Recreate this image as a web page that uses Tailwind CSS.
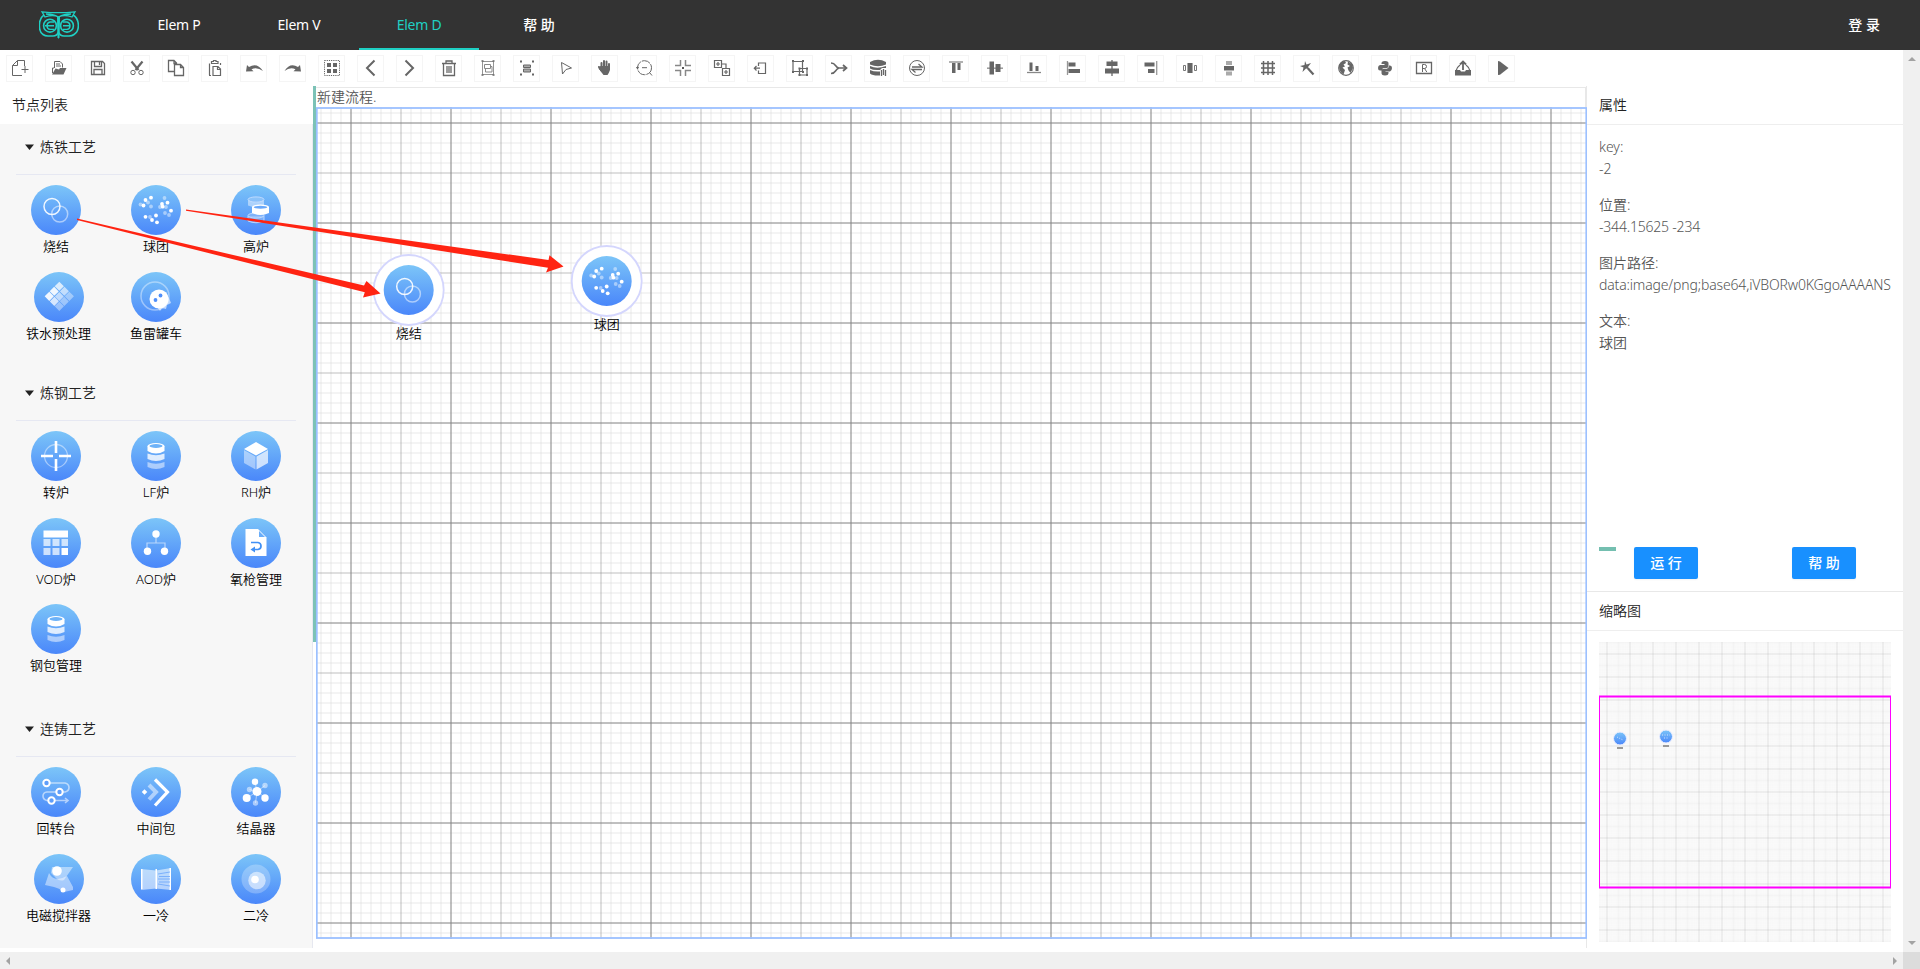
<!DOCTYPE html>
<html lang="zh-CN">
<head>
<meta charset="utf-8">
<title>Elem D</title>
<script src="https://cdn.jsdelivr.net/npm/@tailwindcss/browser@4"></script>
</head>
<body class="relative flex h-[969px] w-[1920px] flex-col overflow-hidden bg-white font-['Noto_Sans','Noto_Sans_CJK_SC',sans-serif] text-sm text-[#555]">

<svg class="absolute size-0" aria-hidden="true">
  <defs>
    <linearGradient id="ball" x1="0" y1="0" x2="0" y2="1"><stop offset="0" stop-color="#7cc5f8"/><stop offset="1" stop-color="#4a87fa"/></linearGradient>
    <g id="tile">
      <path stroke="lightgray" stroke-width=".5" d="M10 0V100M20 0V100M30 0V100M40 0V100M60 0V100M70 0V100M80 0V100M90 0V100M0 10H100M0 20H100M0 30H100M0 40H100M0 60H100M0 70H100M0 80H100M0 90H100"/>
      <path stroke="gray" stroke-width=".5" d="M0 0V100M100 0V100M0 0H100M0 100H100"/>
      <path stroke="gray" d="M50 0V100M0 50H100"/>
    </g>
    <pattern id="grid" width="100" height="100" patternUnits="userSpaceOnUse" patternTransform="translate(-15 -34)"><use href="#tile"/></pattern>
  </defs>
</svg>

<header class="flex h-[50px] shrink-0 items-center bg-[#333] text-white">
  <div class="w-[119px] pl-[39px]">
    <svg class="h-7 w-10" viewBox="0 0 40 28" fill="none" stroke="#1fd0c4" stroke-width="1.6">
      <path d="M5 4C-1 8-1 20 4 23.500Q6 25 9 25H14Q18 25 19.500 21Q21 25 25 25H30Q33 25 35 23.500C41 20 41 8 34 4"/>
      <path stroke-width="1.300" d="M3 .8Q19.500 2.500 36 .8L33 6Q25 3 19.500 6Q14 3 6 6ZM7 3Q14 3 19.500 6Q25 3 32 3"/>
      <circle cx="11" cy="14.700" r="6.400"/><circle cx="28" cy="14.700" r="6.400"/>
      <path stroke-width="1.400" d="M6 14.700H15M15 11H11Q8 11.500 8 14.700T11 18.400H15M24 11H28Q31 11.500 31 14.700T28 18.400H24M24 14.700H31"/>
      <path fill="#1fd0c4" stroke-width="1" d="M18.500 6H20.500L20 27H19Z"/>
    </svg>
  </div>
  <nav class="flex h-full flex-1 text-center leading-[50px]">
    <a class="w-[120px] tracking-[-0.25px]">Elem P</a><a class="w-[120px] tracking-[-0.25px]">Elem V</a>
    <a class="w-[120px] border-b-2 border-[#1fd0c4] tracking-[-0.25px] text-[#1fd0c4]">Elem D</a><a class="w-[120px] font-medium">帮 助</a>
  </nav>
  <a class="mr-10 font-medium">登 录</a>
</header>

<div class="flex min-h-0 flex-1">
  <div class="flex w-[1903px] flex-col">
    <div id="toolbar" class="flex h-[36px] shrink-0 gap-3 pt-[5px] pl-1.5"></div>
    <div class="flex h-[862px] shrink-0">
      <aside class="flex w-[313px] shrink-0 flex-col">
        <h2 class="h-[38px] pl-3 leading-[37px] font-[350] text-[#222]">节点列表</h2>
        <div id="palette" class="h-[824px] border-r border-[#e6e8f0] bg-[#f7f7f7] px-4"></div>
      </aside>

      <main class="relative w-[1273px] shrink-0">
        <div class="mt-px ml-[3px] h-[21px] border-t border-r border-[#e8e8e8] pl-px leading-[17px] font-[350]">新建流程.</div>
        <svg id="board" class="-mt-px ml-[3px] block" width="1271" height="832">
          <rect width="1271" height="832" fill="#fff"/><rect width="1271" height="832" fill="url(#grid)"/>
          <rect x=".8" y="1" width="1269.500" height="830" fill="none" stroke="#9cc0ff" stroke-width="1.800"/>
          <g id="placed"></g>
        </svg>
        <div class="absolute top-0 left-0 h-[556px] w-[3px] bg-[#7cc2b6]"></div>
      </main>

      <section class="flex flex-1 flex-col border-l border-[#e8e8e8] font-[350]">
        <h2 class="h-[39px] border-b border-[#eee] pl-3 leading-[37px] text-[#222]">属性</h2>
        <dl class="h-[419px] pt-[11px] pl-3 leading-[22px] text-[#555]">
          <dt>key:</dt><dd class="mb-[14px]">-2</dd>
          <dt>位置:</dt><dd class="mb-[14px] tracking-[-0.2px]">-344.15625 -234</dd>
          <dt>图片路径:</dt><dd class="mb-[14px] tracking-[-0.16px]">data:image/png;base64,iVBORw0KGgoAAAANS</dd>
          <dt>文本:</dt><dd>球团</dd>
        </dl>
        <div class="flex h-[48px] border-b border-[#e8e8e8] pt-[3px] pl-3">
          <i class="mr-[18px] h-1 w-[17px] bg-[#74bfb0]"></i>
          <button class="h-8 w-16 rounded-xs bg-[#1890ff] font-medium text-white shadow-xs">运 行</button>
          <button class="ml-[94px] h-8 w-16 rounded-xs bg-[#1890ff] font-medium text-white shadow-xs">帮 助</button>
        </div>
        <h2 class="h-[39px] border-b border-[#eee] pl-3 leading-[38px] text-[#222]">缩略图</h2>
        <svg class="mt-[11px] ml-3" width="292" height="300" id="mini">
          <defs><pattern id="minigrid" width="100" height="100" patternUnits="userSpaceOnUse" patternTransform="translate(-3.500 .5) scale(.23)"><use href="#tile"/></pattern></defs>
          <rect width="292" height="300" fill="#fdfdfd"/><rect width="292" height="300" fill="url(#minigrid)"/>
          <g fill="url(#ball)" stroke="#eceeff"><circle cx="21" cy="96.500" r="6.500"/><circle cx="67" cy="94.500" r="6.500"/></g>
          <path stroke="#fff" opacity=".7" stroke-dasharray="1 1.500" d="M18 95L24 98M63 93L71 93M65 96L69 96"/>
          <path stroke="#999" stroke-width="2" d="M18 106H24M64 104H70"/>
          <path fill="none" stroke="#f0f" d="M.5 54V246M291.500 54V246"/>
          <path fill="none" stroke="#f0f" stroke-width="2" d="M0 54.500H292M0 245.500H292"/>
        </svg>
      </section>
    </div>
    <div class="mt-1 flex h-[17px] shrink-0 items-center justify-between bg-[#f0f0f0] px-1.5">
      <svg class="h-2 w-1" viewBox="0 0 4 8"><path fill="#a3a3a3" d="M4 0V8L0 4Z"/></svg>
      <svg class="h-2 w-1" viewBox="0 0 4 8"><path fill="#a3a3a3" d="M0 0V8L4 4Z"/></svg>
    </div>
  </div>
  <div class="flex w-[17px] flex-col items-center bg-[#f0f0f0]">
    <svg class="mt-[7px] h-1 w-2" viewBox="0 0 8 4"><path fill="#a3a3a3" d="M0 4H8L4 0Z"/></svg>
    <svg class="mt-auto mb-[7px] h-1 w-2" viewBox="0 0 8 4"><path fill="#a3a3a3" d="M0 0H8L4 4Z"/></svg>
    <div class="size-[17px] bg-[#dcdcdc]"></div>
  </div>
</div>

<svg class="pointer-events-none absolute top-0 left-0" width="600" height="310">
  <path fill="#ff2412" d="M77 218.600L364 285.500 366.500 281 380.500 293.500 363 297.500 364.800 292.300 77 220ZM186 209.400L548.500 260 549.500 255.300 563.500 266.500 546 272.500 548 267.800 186 210.800Z"/>
</svg>

<script>
// Toolbar glyphs, one 27x27 button each
const tools = [
  '<path d="M6.500 20.500V10.500L11.500 5.500H18.500V11M16 20.500H6.500M11.500 5.500V10.500H6.500M19 11V18M15.500 14.500H22.500"/>',
  '<path d="M9.500 13V6.500H15L17.500 9V12.500M11 9H15M11 11H16M7.500 18V13H9"/><path class="fill-[#666]" stroke="none" d="M7 19.500L10.500 13.500 14 14.500 15 13H21.500L18.500 19.500Z"/>',
  '<path stroke-width="1.300" d="M7.500 6.500H18.500L20.500 8.500V19.500H7.500ZM10.500 6.500V11.500H17.500V6.500M15.500 7V10M10 19.500V14.500H18V19.500"/>',
  '<path stroke-width="2.200" d="M8.500 6.500L15.500 15M19.500 6.500L12.500 15"/><circle cx="10" cy="17.500" r="2.200"/><circle cx="18" cy="17.500" r="2.200"/>',
  '<path stroke-width="1.300" d="M12.500 16.500H6.500V5.500H12L14.500 8V10M12 5.500V8.500H14.500M12.500 9.500H18.500L21.500 12.500V20.500H12.500ZM18.500 9.500V12.500H21.500"/>',
  '<path stroke-width="1.200" d="M8.500 20V8.500M10 20.500H8M10.500 8.500V6.500H12.500V5.500H15V6.500H17V8.500ZM19.500 8V10M12 11.500H17L19.500 14V20.500H12ZM16.500 11.500V14.500H19.500"/>',
  '<path class="fill-[#666]" stroke="none" d="M6 16.500L7 10 9 12Q17 7 23 16Q17 11.500 11.500 14.200L13.500 16.200Z"/>',
  '<path class="fill-[#666]" stroke="none" d="M22 16.500L21 10 19 12Q11 7 5.500 16Q11 11.500 16.500 14.200L14.500 16.200Z"/>',
  '<rect x="6.500" y="5.500" width="15" height="15" stroke-dasharray="1.200 1"/><path class="fill-[#666]" stroke="none" d="M9 8h4v4H9zM15 8h4v4h-4zM9 14h4v4H9zM15 14h4v4h-4z"/>',
  '<path stroke-width="2" d="M17.500 5.500L10 13 17.500 20.500"/>',
  '<path stroke-width="2" d="M9.500 5.500L17 13 9.500 20.500"/>',
  '<path stroke-width="1.300" d="M7 8.500H21M11 8V6H17V8M8.500 9V20.500H19.500V9M12 11V18M14 11V18M16 11V18"/>',
  '<path stroke-width=".7" d="M8.500 6.500H19.500V19.500H8.500Z"/><path stroke="#888" stroke-width="1" d="M10.500 9.500H16.500V13.500H10.500ZM16.500 11.500H18V17H11.500V13.500"/><path stroke-width="1.500" d="M7.500 6H9.500M18.500 6H20.500M7.500 20H9.500M18.500 20H20.500"/>',
  '<path d="M10.500 10H17.500V12.500H10.500ZM10.500 14H17.500V17H10.500Z" fill="#aaa"/><path stroke-width="2" d="M7 6.500H9M19 6.500H21M7 19.500H9M19 19.500H21"/>',
  '<path d="M9.500 7.500L19.500 13 14 14.500 10.500 19Z"/>',
  '<path stroke-width="2" stroke-linecap="round" d="M10.500 12V8M13 12V6M15.500 12V6.500M18 13V9M9 14L8 12"/><path class="fill-[#666]" stroke="none" d="M8.500 12L9.500 11H19V15Q18 18 16.500 20H12.500L9 15.500Z"/>',
  '<circle cx="14.500" cy="12.700" r="7" stroke-dasharray="9 1"/><path d="M12 12.700H17M19.500 17.500L22 20.500M6 12.700H9M7.500 11.500V14"/>',
  '<path stroke="#888" stroke-width="1.500" d="M11.500 5V10.500H6M16.500 5V10.500H22M11.500 21V15.500H6M16.500 21V15.500H22"/><path class="fill-[#555]" stroke="none" d="M13 12h2v2h-2z"/>',
  '<path stroke-width="1.200" d="M6.500 5.500H13.500V12.500H6.500ZM14.500 13.500H21.500V20.500H14.500ZM8 9H12M10 7V11M16 17H20M18 15V19M14 9H18V13"/>',
  '<path stroke-width="1.200" d="M11.500 11V8H18.500V18.500H11.500V15.500M7.500 13.200H13M9.500 11L7.300 13.200 9.500 15.500"/>',
  '<path stroke-width="1.200" d="M7 6.500H16.500V16.500H7ZM13.500 13.500H21V20H13.500Z"/><path class="fill-[#666]" stroke="none" d="M6 5h2v2H6zM16 5h2v2h-2zM6 16h2v2H6zM16 16h2v2h-2zM12.500 12.500h2v2h-2zM20 12.500h2v2h-2zM12.500 19h2v2h-2zM20 19h2v2h-2z"/>',
  '<path stroke-width="1.500" d="M6 8Q9 8 10.500 10.500T14 13H21M6 18.500Q9 18.500 10.500 16T14 13"/><path stroke-width="1.700" d="M18 10L21.500 13 18 16"/>',
  '<path class="fill-[#666]" stroke="none" d="M6 7Q14 2.500 22 7V9.500Q14 13 6 9.500ZM6 11Q13 14.500 22 11V13H18L16 15Q9 15.500 6 13.500ZM6 15Q10 17 16 16.500V20.500Q9 21 6 18.500Z"/><path stroke-width="1.300" d="M17.500 15V21M19.500 14V20M21.500 15V21"/>',
  '<circle cx="14" cy="13" r="7.500"/><path stroke-width="1.300" d="M9 12H19L15.500 9M19 14.500H9L12.500 17.500"/>',
  '<path stroke="#999" stroke-width="1.500" d="M7 7H21"/><path class="fill-[#666]" stroke="none" d="M10 8h3.500v10H10zM15.500 8h3v7h-3z"/>',
  '<path stroke="#999" stroke-width="1.500" d="M6 13.200H22"/><path class="fill-[#666]" stroke="none" d="M8.500 6.500H13v13H8.500zM14.500 9h5v8h-5z"/>',
  '<path stroke="#888" stroke-width="1.300" d="M7 17.500H21"/><path class="fill-[#666]" stroke="none" d="M9.500 7.500h3V16h-3zM15.500 11h3v5h-3z"/>',
  '<path stroke="#999" stroke-width="1.300" d="M8.500 6V20"/><path class="fill-[#666]" stroke="none" d="M9.500 7.500h7v4h-7zM9.500 14H21v4H9.500z"/>',
  '<path stroke-width="1.300" d="M14 5V21"/><path class="fill-[#666]" stroke="none" d="M8.500 6.500h11V11h-11zM7 13.500h14v5H7z"/>',
  '<path stroke="#999" stroke-width="1.300" d="M19.700 6V20"/><path class="fill-[#666]" stroke="none" d="M7.500 7.500h10v4h-10zM11 14h6.500v4H11z"/>',
  '<path stroke-width=".9" d="M7.500 10.500H9.500V15.500H7.500ZM18.500 10.500H20.500V15.500H18.500Z"/><path fill="#aaa" stroke="none" d="M11 8h6v10h-6z"/><path class="fill-[#666]" stroke="none" d="M12 8h4v10h-4z"/>',
  '<path fill="#aaa" stroke="none" d="M11 6h6v4h-6zM11 16.500h6v4h-6z"/><path class="fill-[#666]" stroke="none" d="M9 11h10v4.500H9z"/>',
  '<path stroke-width="1.500" d="M9.500 6V20M14 6V20M18.500 6V20M7 8.500H21M7 13H21M7 17.500H21"/>',
  '<path class="fill-[#666]" stroke="none" d="M12 6L13.500 9.500 18 8 15 12 17 14.500 13 13.500 9.500 17 10.500 12.500 7 11 11.500 10Z"/><path stroke-width="2.200" d="M15 13.500L20.500 19.500"/>',
  '<circle cx="14" cy="13" r="7.300" stroke-width="1.200"/><path class="fill-[#666]" stroke="none" d="M7 11Q8.500 6 13 6L14 8 11.500 9.500 13 11.500 10.500 12.500 13 15 11.500 19.500Q7 17 7 11ZM16 6.500L20 9 21 13 18.500 18 16.500 15.500 15.500 12.500 18 11 15.500 9.500Z"/>',
  '<path class="fill-[#666]" stroke="none" d="M10.500 9Q10 6 14 6T17.500 9V12L16 13H12L10.500 15.500H9Q7 15.500 7 13T9 10H13.500V9ZM17.500 17Q18 20.500 14 20.500T10.500 17V15L12 13.700H16L18 12V10.500H19Q21 10.500 21 13T19 16.500H14.500V17Z"/>',
  '<path stroke-width="1.300" d="M6.500 7.500H21.500V18.500H6.500Z"/><path d="M12.500 17V9.500H14.500Q16.500 9.500 16.500 11.500T14.500 13.500H12.500M14.500 13.500L16.800 17"/>',
  '<path stroke-width="1.800" d="M14 15V7M11 9.500L14 6.500 17 9.500"/><path stroke-width="1.200" d="M11 10Q8 12 7 16M17 10Q20 12 21 16"/><path class="fill-[#666]" stroke="none" d="M6 15H11L12 16.500H16L17 15H22V20.500H6Z"/>',
  '<path class="fill-[#666]" stroke="none" d="M10 6L12 6.500 20.500 13 12 19.700 10 20Z"/>',
];
document.getElementById('toolbar').innerHTML = tools.map(t =>
  `<button class="size-[27px] shrink-0 border border-[#f5f5f5]"><svg class="-m-px size-[27px]" viewBox="0 0 27 27" fill="none" stroke="#666">${t}</svg></button>`).join('');

const dots = (list, o) => `<g fill="#fff" opacity="${o}">` + list.map(([x, y]) => `<circle cx="${x}" cy="${y}" r="1.900"/>`).join('') + '</g>';
const drum = '<g fill="#fff"><path opacity=".5" d="M16.500 31Q25 34.500 33.500 31V36Q25 40 16.500 36Z"/><path opacity=".8" d="M16.500 22.500Q25 26 33.500 22.500V28Q25 32 16.500 28Z"/><path d="M16.500 15V20Q25 25 33.500 20V15Z"/><ellipse cx="25" cy="15" rx="8.500" ry="3"/></g><ellipse cx="25" cy="15" rx="6.500" ry="1.900" fill="#6db2f8"/>';
const art = {
  '烧结': '<g fill="none" stroke="#fff"><circle cx="28.700" cy="29" r="8" stroke-width="1.500" opacity=".5"/><circle cx="21" cy="21.500" r="8" stroke-width="1.500" opacity=".9"/></g>',
  '球团': dots([[14.500,15],[20,12.700],[12.500,20.500],[36.500,17.700],[31.700,21.700],[31,19],[40,25.700],[14.500,31.800],[25,30.500],[21,35],[26,37.300]], 1) + dots([[20,21.500],[33.500,13],[38,30],[34,28],[17,17.500],[9.500,19.500],[35,22],[29,22],[19,32]], .45),
  '高炉': '<path fill="#fff" opacity=".45" d="M17 15Q25 19.500 33 15V20.500Q25 24 17 20.500Z"/><g fill="#fff" fill-opacity=".2" stroke="#c4ddfe" stroke-width=".9"><ellipse cx="25" cy="14.500" rx="8" ry="2.600"/><path d="M17 31V36Q25 39.500 33 36V31"/><ellipse cx="25" cy="30.500" rx="8" ry="2.600"/></g><path fill="#fff" d="M21 22V28Q29.500 32 38 28V22Z"/><ellipse cx="29.500" cy="22" rx="8.500" ry="2.500" fill="#fff"/><ellipse cx="29.500" cy="22.300" rx="6.800" ry="1.500" fill="#69a8f9"/>',
  '铁水预处理': '<g transform="translate(25.300 24.500) rotate(45)" fill="#fff"><path opacity=".9" d="M-10.500 3.700h6.500v6.500h-6.500zM-10.500-3.200h6.500v6.300h-6.500z"/><path opacity=".75" d="M-10.500-10.500h6.500v6.500h-6.500zM-3.200 3.700h6.300v6.500h-6.300z"/><path opacity=".6" d="M-3.200-3.200h6.300v6.300h-6.300zM-3.200-10.500h6.300v6.500h-6.300z"/><path opacity=".4" d="M3.700-10.500h6.500v6.500H3.700zM3.700-3.200h6.500v6.300H3.700zM3.700 3.700h6.500v6.500H3.700z"/></g>',
  '鱼雷罐车': '<circle cx="24" cy="24" r="14" fill="none" stroke="#fff" stroke-width="1.500" opacity=".4"/><path fill="#fff" opacity=".6" d="M35 20L38 26 40 31 36 33 35 37 31 36 29 39 26 35Z"/><circle cx="28" cy="27" r="9.500" fill="#fff"/><circle cx="24.500" cy="28" r="1.900" fill="#4f8ffa"/><circle cx="29.500" cy="23.500" r="1.900" fill="#4f8ffa"/>',
  '转炉': '<g fill="none" stroke="#fff"><circle cx="25" cy="25" r="11.500" opacity=".45" stroke-width="1.300"/><path stroke-width="2.600" d="M25 10V22M25 28V40M10 25H22M28 25H40"/></g>',
  'LF炉': drum, '钢包管理': drum,
  'RH炉': '<g fill="#fff"><path d="M25 11L37 18 25 24.500 13 18Z"/><path opacity=".45" d="M13 19L24.500 25.500V38.500L13 32Z"/><path opacity=".7" d="M37 19L25.500 25.500V38.500L37 32Z"/></g>',
  'VOD炉': '<g fill="#fff"><path d="M12.500 12.500h24.500v7H12.500zM30.500 30h6.500v7h-6.500z"/><path opacity=".7" d="M12.500 21h7v7h-7zM21.500 21h7v7h-7zM30.500 21h6.500v7h-6.500zM12.500 30h7v7h-7zM21.500 30h7v7h-7z"/></g>',
  'AOD炉': '<path fill="none" stroke="#fff" opacity=".55" stroke-width="1.200" d="M25 16V25M16 33V25H34V33"/><g fill="#fff"><circle cx="25" cy="16" r="3.700"/><circle cx="16.500" cy="33.300" r="3.700"/><circle cx="33.500" cy="33.300" r="3.700"/></g>',
  '氧枪管理': '<path fill="#fff" d="M14.500 11H27L35.500 19.500V38H14.500Z"/><path fill="#6aadf9" d="M28 13V19H34Z"/><path fill="none" stroke="#3f8ff5" stroke-width="1.700" d="M20 24.500H27Q30 25 30 28T27 31.500H22"/><path fill="#3f8ff5" d="M24 28.500V34.500L19.500 31.500Z"/>',
  '回转台': '<g fill="none" stroke="#fff"><path opacity=".55" stroke-width="1.600" d="M18 16H34Q38 17 38 20.500T34 25H16Q12 25.500 12 29T16 33.500H36M34 31L37 33.500 34 36"/></g><g fill="#5f9efa" stroke="#fff" stroke-width="2"><circle cx="15.500" cy="16" r="3.200"/><circle cx="28.500" cy="25" r="3.200"/><circle cx="20.500" cy="33.500" r="3.200"/></g>',
  '中间包': '<g fill="none" stroke="#fff"><path stroke-width="3.200" d="M24 12.500L36.500 25 24 38.500"/><path opacity=".5" stroke-width="4" d="M18 18L25 25 18 32.500"/></g><path fill="#fff" d="M13.500 22.300L16.300 25 13.500 27.700 10.800 25Z"/>',
  '结晶器': '<g fill="#fff" stroke="#fff"><path opacity=".5" d="M26 24.500L24 15M26 24.500L34 18.500M26 24.500L18.500 22.500M26 24.500L16 31M26 24.500L34.500 31M26 24.500L24.500 36"/><g stroke="none"><g opacity=".5"><circle cx="34" cy="18.500" r="2.700"/><circle cx="18.500" cy="22.500" r="2.700"/><circle cx="24.500" cy="36" r="2.700"/></g><circle cx="24" cy="14.700" r="3.200"/><circle cx="26" cy="24.500" r="4.500"/><circle cx="15.700" cy="31" r="4"/><circle cx="34" cy="31" r="3.700"/></g></g>',
  '电磁搅拌器': '<g fill="#fff"><path opacity=".45" d="M18 13H39L30 26Q25 28 20 22L17 19Z"/><path opacity=".45" d="M15 19Q20 29 33 22L39 33V36L30 38Q25 34 20 33L11 31Z"/><circle cx="23" cy="17" r="4.800"/><circle cx="29" cy="36" r="2.500"/></g>',
  '一冷': '<g fill="#fff"><path opacity=".55" d="M10 15L25 16.500 40 14V36L25 34.500 10 36Z"/><path d="M10 15h1.500v20H10zM24.500 15H26v20h-1.500zM38.500 14H40v22h-1.500z"/></g><path stroke="#6ba6fb" stroke-width=".8" d="M27 20L39 18M27 25H39M27 30L39 32M28 22.500H39M28 28H39"/>',
  '二冷': '<g fill="#fff"><circle cx="25" cy="25" r="14.500" opacity=".25"/><circle cx="26" cy="26.500" r="8.700" opacity=".55"/><circle cx="24" cy="25.500" r="3.800"/></g>',
};
const ball = n => `<circle cx="25" cy="25" r="25" fill="url(#ball)"/>${art[n]}`;

const groups = [
  ['炼铁工艺', 'h-[246px]', ['烧结', '球团', '高炉', '铁水预处理', '鱼雷罐车']],
  ['炼钢工艺', 'h-[336px]', ['转炉', 'LF炉', 'RH炉', 'VOD炉', 'AOD炉', '氧枪管理', '钢包管理']],
  ['连铸工艺', 'h-[240px]', ['回转台', '中间包', '结晶器', '电磁搅拌器', '一冷', '二冷']],
];
document.getElementById('palette').innerHTML = groups.map(([title, h, names]) =>
  `<section class="${h}"><h3 class="flex h-[51px] items-center gap-1.5 border-b border-[#e6e8f2] pb-[5px] pl-[9px] font-[350] text-[#222]"><svg class="h-[6px] w-[9px]" viewBox="0 0 9 6"><path fill="#222" d="M0 .5H9L4.500 6Z"/></svg>${title}</h3>
  <div class="grid grid-cols-[repeat(3,100px)] pt-2.5 pl-2.5">${names.map(n =>
    `<figure class="flex h-[86.700px] w-fit min-w-15 flex-col items-center"><svg class="size-[50px] shrink-0" viewBox="0 0 50 50">${ball(n)}</svg><figcaption class="pt-px text-[13px] leading-5 font-[350] whitespace-nowrap text-black">${n}</figcaption></figure>`).join('')}</div></section>`).join('');

// Nodes dropped on the board
document.getElementById('placed').innerHTML = [['烧结', 92.700, 183], ['球团', 290.700, 174]].map(([n, x, y]) =>
  `<g transform="translate(${x} ${y})"><circle r="35" fill="#fff" stroke="#d4d6fd" stroke-width="1.800"/><g transform="translate(-25 -25)">${ball(n)}</g><text y="47.500" text-anchor="middle" class="text-[13px] font-[350]" fill="#000">${n}</text></g>`).join('');
</script>
</body>
</html>
